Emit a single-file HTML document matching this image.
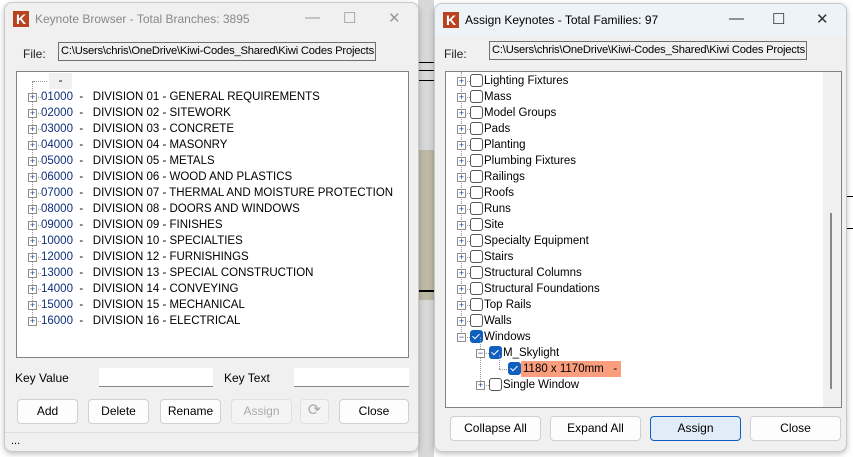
<!DOCTYPE html>
<html><head><meta charset="utf-8"><style>
*{box-sizing:border-box;margin:0;padding:0}
body{width:853px;height:457px;overflow:hidden;background:#fff;position:relative;font-family:"Liberation Sans",sans-serif;font-size:12px;color:#000}
.bg{position:absolute}
.win{position:absolute;background:#f0f0f0;border:1px solid #c8c8c8;border-radius:8px;overflow:hidden;box-shadow:0 2px 6px rgba(0,0,0,.25)}
.title{position:absolute;left:0;right:0;top:0;height:32px}
.title .t{position:absolute;left:30px;top:9px;font-size:12px}
.logo{position:absolute;left:8px;top:8px;width:16px;height:16px;background:#b8431e;color:#fff;font-weight:bold;font-size:14px;line-height:16px;text-align:center}
.ctl{position:absolute;top:6px;font-size:15px;color:#333}
.lbl{position:absolute}
.file{position:absolute;border:1px solid #6f6f6f;background:#f0f0f0;height:19px;padding:2px 2px;font-size:11.2px;letter-spacing:-0.2px;white-space:nowrap;overflow:hidden}
.tree{position:absolute;background:#fff;border:1px solid #828282}
.row{position:absolute;height:16px;line-height:16px;white-space:nowrap;font-size:11.5px}
.pm{position:absolute;width:9px;height:9px;border:1px solid #8d8d8d;background:#fff;font-size:9px;line-height:7px;text-align:center;color:#1c3f8a}
.cb{position:absolute;width:13px;height:13px;border:1px solid #555;border-radius:3px;background:#fff}
.cb.on{background:#0f5fc0;border-color:#0f5fc0}
.cb.on:after{content:"";position:absolute;left:3px;top:1px;width:3px;height:6px;border:solid #fff;border-width:0 1.3px 1.3px 0;transform:rotate(45deg)}
.btn{position:absolute;background:#fdfdfd;border:1px solid #d0d0d0;border-radius:4px;text-align:center;font-size:12px}
.inp{position:absolute;background:#fff;border-bottom:1px solid #888;height:19px}
.dot{position:absolute;border-left:1px dotted #999}
.hdot{position:absolute;border-top:1px dotted #999}
</style></head><body>
<div class="bg" style="left:418px;top:0;width:16px;height:457px;background:#d8d8d8"></div>
<div class="bg" style="left:418px;top:150px;width:16px;height:150px;background:#bdb9a6"></div>
<div class="bg" style="left:418px;top:62px;width:16px;height:1px;background:#000"></div>
<div class="bg" style="left:418px;top:70px;width:16px;height:1px;background:#000"></div>
<div class="bg" style="left:418px;top:80px;width:16px;height:1px;background:#000"></div>
<div class="bg" style="left:418px;top:290px;width:16px;height:2px;background:#000"></div>
<div class="bg" style="left:846px;top:0;width:7px;height:457px;background:#fff"></div>
<div class="bg" style="left:846px;top:196px;width:7px;height:1px;background:#000"></div>
<div class="bg" style="left:846px;top:228px;width:7px;height:1px;background:#000"></div>

<div class="win" style="left:4px;top:2px;width:415px;height:450px">
 <div class="title"><div class="logo">K</div><div class="t" style="color:#888">Keynote Browser - Total Branches: 3895</div>
  <div class="ctl" style="left:300px;color:#999">—</div><div class="ctl" style="left:338px;color:#999">☐</div><div class="ctl" style="left:383px;color:#999">✕</div></div>
 <div class="lbl" style="left:18px;top:44px;color:#222">File:</div>
 <div class="file" style="left:53px;top:39px;width:318px">C:\Users\chris\OneDrive\Kiwi-Codes_Shared\Kiwi Codes Projects</div>
 <div class="tree" style="left:11px;top:68px;width:393px;height:287px">
  <div class="dot" style="left:15px;top:9px;height:242px"></div>
  <div class="hdot" style="left:16px;top:9px;width:14px"></div>
  <div class="row" style="left:32px;top:1px;background:#f0f0f0;width:23px;text-align:center">-</div>
  <div id="ltree"></div>
 </div>
 <div class="lbl" style="left:10px;top:368px">Key Value</div>
 <div class="inp" style="left:94px;top:365px;width:114px"></div>
 <div class="lbl" style="left:219px;top:368px">Key Text</div>
 <div class="inp" style="left:289px;top:365px;width:115px"></div>
 <div class="btn" style="left:12px;top:396px;width:61px;height:25px;line-height:23px">Add</div>
 <div class="btn" style="left:83px;top:396px;width:61px;height:25px;line-height:23px">Delete</div>
 <div class="btn" style="left:155px;top:396px;width:61px;height:25px;line-height:23px">Rename</div>
 <div class="btn" style="left:226px;top:396px;width:61px;height:25px;line-height:23px;color:#aaa;background:#f4f4f4;border-color:#e0e0e0">Assign</div>
 <div class="btn" style="left:295px;top:396px;width:29px;height:25px;line-height:22px;color:#aaa;background:#f4f4f4;border-color:#e0e0e0;font-size:16px">⟳</div>
 <div class="btn" style="left:334px;top:396px;width:70px;height:25px;line-height:23px">Close</div>
 <div class="bg" style="left:0;top:429px;width:415px;height:1px;background:#ddd"></div>
 <div class="lbl" style="left:6px;top:432px;font-size:11px">...</div>
</div>

<div class="win" style="left:434px;top:3px;width:413px;height:449px">
 <div class="title" style="background:#eef3f8"><div class="logo">K</div><div class="t">Assign Keynotes - Total Families: 97</div>
  <div class="ctl" style="left:294px">—</div><div class="ctl" style="left:337px">☐</div><div class="ctl" style="left:381px">✕</div></div>
 <div class="lbl" style="left:9px;top:43px;color:#222">File:</div>
 <div class="file" style="left:54px;top:37px;width:318px">C:\Users\chris\OneDrive\Kiwi-Codes_Shared\Kiwi Codes Projects</div>
 <div class="tree" style="left:10px;top:67px;width:397px;height:337px">
  <div class="bg" style="left:377px;top:0;width:18px;height:335px;background:#f0f0f0"></div>
  <div class="bg" style="left:384px;top:141px;width:2px;height:176px;background:#888"></div>
  <div class="dot" style="left:15px;top:0;height:264px"></div>
  <div id="rtree"></div>
 </div>
 <div class="btn" style="left:15px;top:412px;width:91px;height:25px;line-height:23px">Collapse All</div>
 <div class="btn" style="left:115px;top:412px;width:91px;height:25px;line-height:23px">Expand All</div>
 <div class="btn" style="left:215px;top:412px;width:91px;height:25px;line-height:23px;background:#e0ecf8;border-color:#0f5fc0">Assign</div>
 <div class="btn" style="left:315px;top:412px;width:91px;height:25px;line-height:23px">Close</div>
</div>
<script>
var L=[["01000","GENERAL REQUIREMENTS"],["02000","SITEWORK"],["03000","CONCRETE"],["04000","MASONRY"],["05000","METALS"],["06000","WOOD AND PLASTICS"],["07000","THERMAL AND MOISTURE PROTECTION"],["08000","DOORS AND WINDOWS"],["09000","FINISHES"],["10000","SPECIALTIES"],["12000","FURNISHINGS"],["13000","SPECIAL CONSTRUCTION"],["14000","CONVEYING"],["15000","MECHANICAL"],["16000","ELECTRICAL"]];
var h="";
L.forEach(function(r,i){var y=17+i*16;var d=r[0].slice(0,2);
h+='<div class="pm" style="left:11px;top:'+(y+4)+'px">+</div><div class="hdot" style="left:21px;top:'+(y+8)+'px;width:3px"></div>';
h+='<div class="row" style="left:24px;top:'+y+'px"><span style="color:#0d2f7a">'+r[0]+'</span>&nbsp;&nbsp;-&nbsp;&nbsp;&nbsp;DIVISION '+d+' - '+r[1]+'</div>';});
document.getElementById("ltree").innerHTML=h;
var R=["Lighting Fixtures","Mass","Model Groups","Pads","Planting","Plumbing Fixtures","Railings","Roofs","Runs","Site","Specialty Equipment","Stairs","Structural Columns","Structural Foundations","Top Rails","Walls"];
h="";
function item(x,y,sign,on,txt){
 if(sign)h+='<div class="pm" style="left:'+(x)+'px;top:'+(y+4)+'px">'+sign+'</div>';
 h+='<div class="hdot" style="left:'+(x+10)+'px;top:'+(y+8)+'px;width:5px"></div>';
 h+='<div class="cb'+(on?' on':'')+'" style="left:'+(x+13)+'px;top:'+(y+1)+'px"></div>';
 h+='<div class="row" style="left:'+(x+27)+'px;top:'+y+'px">'+txt+'</div>';}
R.forEach(function(t,i){item(11,1+i*16,"+",0,t)});
item(11,257,"−",1,"Windows");
h+='<div class="dot" style="left:34px;top:265px;height:48px"></div>';
item(30,273,"−",1,"M_Skylight");
h+='<div class="dot" style="left:53px;top:283px;height:14px"></div><div class="hdot" style="left:53px;top:297px;width:10px"></div>';
h+='<div class="cb on" style="left:62px;top:290px"></div><div class="row" style="left:75px;top:289px;background:#fa9e7e;width:100px;padding-left:2px">1180 x 1170mm &nbsp;&nbsp;-</div>';
item(30,305,"+",0,"Single Window");
document.getElementById("rtree").innerHTML=h;
</script>
</body></html>
